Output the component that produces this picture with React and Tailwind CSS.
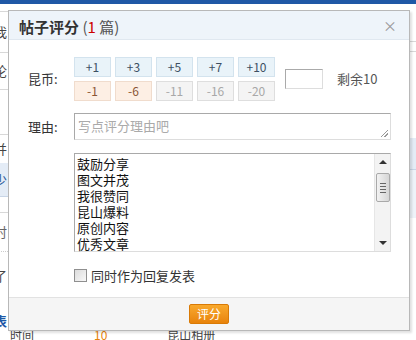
import React from "react";

const plus = ["+1", "+3", "+5", "+7", "+10"];
const minus = [
  { v: "-1", on: true },
  { v: "-6", on: true },
  { v: "-11", on: false },
  { v: "-16", on: false },
  { v: "-20", on: false },
];
const reasons = ["鼓励分享", "图文并茂", "我很赞同", "昆山爆料", "原创内容", "优秀文章"];

function Scrollbar() {
  return (
    <div className="w-[16px] h-full flex flex-col bg-[#f3f3f3] border-l border-[#e6e6e6]">
      <div className="h-[16px] flex items-center justify-center">
        <div className="w-0 h-0 border-l-[4px] border-r-[4px] border-b-[4px] border-l-transparent border-r-transparent border-b-[#333]" />
      </div>
      <div className="flex-1 pt-[3px]">
        <div className="mx-auto w-[14px] h-[29px] rounded-[2px] border border-[#a9a9a9] bg-gradient-to-r from-[#f2f2f2] to-[#d6d6d6] flex flex-col items-center justify-center gap-[2px]">
          <div className="w-[6px] h-px bg-[#666]" />
          <div className="w-[6px] h-px bg-[#666]" />
          <div className="w-[6px] h-px bg-[#666]" />
          <div className="w-[6px] h-px bg-[#666]" />
        </div>
      </div>
      <div className="h-[16px] flex items-center justify-center">
        <div className="w-0 h-0 border-l-[4px] border-r-[4px] border-t-[4px] border-l-transparent border-r-transparent border-t-[#333]" />
      </div>
    </div>
  );
}

function RateDialog() {
  return (
    <div className="absolute left-[8px] top-[10px] w-[402px] h-[321px] bg-white border border-[#b8b8b8] shadow-[2px_2px_2px_rgba(0,0,0,0.12)] flex flex-col">
      <div className="h-[29px] bg-[#eef4fa] border-b border-[#e0e8f0] flex items-center justify-between pl-[10px] pr-[12px]">
        <div className="text-[15px] leading-none text-[#333] pt-[2px]">
          <span className="font-bold">帖子评分</span>
          <span className="text-[#555]"> (<span className="text-[#c00]">1</span> 篇)</span>
        </div>
        <span className="text-[14px] leading-none text-[#999]">×</span>
      </div>

      <div className="flex-1 flex flex-col pl-[19px] pt-[17px]">
        <div className="flex items-center">
          <div className="w-[46px] text-[13px] text-[#333]">昆币:</div>
          <div className="flex flex-col gap-[4px]">
            <div className="flex gap-[4px]">
              {plus.map((v) => (
                <div key={v} className="w-[37px] h-[20px] flex items-center justify-center bg-[#e9f3f9] border border-[#d3e3ee] text-[12px] text-[#3c4f62]">
                  {v}
                </div>
              ))}
            </div>
            <div className="flex gap-[4px]">
              {minus.map((m) => (
                <div
                  key={m.v}
                  className={
                    m.on
                      ? "w-[37px] h-[20px] flex items-center justify-center bg-[#fdefe4] border border-[#f0dccd] text-[12px] text-[#8a5534]"
                      : "w-[37px] h-[20px] flex items-center justify-center bg-[#f4f4f4] border border-[#dedede] text-[12px] text-[#a8a8a8]"
                  }
                >
                  {m.v}
                </div>
              ))}
            </div>
          </div>
          <div className="ml-[10px] w-[38px] h-[20px] border border-[#aaa] border-r-[#ddd] border-b-[#ddd] bg-white" />
          <div className="ml-[14px] text-[13px] text-[#555]">剩余10</div>
        </div>

        <div className="flex items-center mt-[12px]">
          <div className="w-[46px] text-[13px] text-[#333]">理由:</div>
          <div className="relative w-[317px] h-[27px] border border-[#a9a9a9] border-r-[#ddd] border-b-[#ddd] px-[3px] pt-[2px] text-[13px] text-[#aaa]">
            写点评分理由吧
            <div className="absolute right-[2px] bottom-[2px] w-[7px] h-[7px] bg-[linear-gradient(135deg,transparent_45%,#999_45%,#999_55%,transparent_55%,transparent_70%,#999_70%,#999_80%,transparent_80%)]" />
          </div>
        </div>

        <div className="ml-[46px] mt-[13px] w-[317px] h-[99px] border border-[#a9a9a9] border-r-[#ddd] border-b-[#ddd] flex">
          <div className="flex-1 pl-[2px] pt-[2px] text-[13px] leading-[16px] text-[#111]">
            {reasons.map((r) => (
              <div key={r} className="h-[16px]">{r}</div>
            ))}
          </div>
          <Scrollbar />
        </div>

        <div className="ml-[46px] mt-[14px] flex items-center gap-[4px]">
          <div className="w-[13px] h-[13px] border border-[#8f8f8f] bg-gradient-to-br from-[#dcdcdc] to-[#f8f8f8]" />
          <span className="text-[13px] text-[#333]">同时作为回复发表</span>
        </div>
      </div>

      <div className="h-[33px] bg-[#f5f5f5] border-t border-[#e2e2e2] flex items-center justify-center">
        <div className="w-[40px] h-[20px] rounded-[2px] bg-gradient-to-b from-[#f9a92c] to-[#e8830a] border border-[#d97a06] flex items-center justify-center text-[12px] text-white">
          评分
        </div>
      </div>
    </div>
  );
}

export default function App() {
  return (
    <div
      className="relative w-[416px] h-[340px] overflow-hidden bg-white"
      style={{ fontFamily: '"Noto Sans CJK SC", "Noto Sans", sans-serif' }}
    >
      <div className="h-[4px] bg-[#1f58a6]" />
      <div className="w-[10px] flex flex-col text-[13px] text-[#444]">
        <div className="h-[8px] border-b border-[#d8d8d8]" />
        <div className="h-[41px] flex items-center -ml-[6px] border-b border-[#d8d8d8]">我</div>
        <div className="h-[37px] flex items-center -ml-[6px] border-b border-[#d8d8d8]">论</div>
        <div className="h-[45px] border-b border-[#d8d8d8]" />
        <div className="h-[28px] flex items-center -ml-[6px]">并</div>
        <div className="h-[34px] flex items-center -ml-[6px] bg-[#e4ecf6] text-[#2a5a9a] border-b border-[#c8d5e6]">少</div>
        <div className="h-[16px] border-b border-[#d8d8d8]" />
        <div className="h-[39px] flex items-center -ml-[6px] border-b border-dotted border-[#ccc] text-[#666]">时</div>
        <div className="h-[48px] flex items-center -ml-[6px]">了</div>
        <div className="h-[30px] flex items-end -ml-[6px] text-[#1f58a6] font-bold">表</div>
      </div>
      <div className="absolute right-0 top-[4px] w-[6px] h-[336px] flex flex-col">
        <div className="h-[38px] border-b border-[#d8d8d8]" />
        <div className="h-[10px] border-b border-[#d8d8d8]" />
        <div className="h-[86px]" />
        <div className="h-[32px] bg-[#e4ecf6] border-b border-[#c8d5e6]" />
        <div className="h-[48px] bg-[#eef3f9]" />
      </div>
      <div className="absolute left-0 bottom-0 w-full h-[9px] flex items-end gap-[60px] pl-[10px] text-[12px] leading-[10px] text-[#444] overflow-hidden">
        <span>时间</span>
        <span className="text-[#e8830a]">10</span>
        <span>昆山相册</span>
      </div>
      <RateDialog />
    </div>
  );
}
